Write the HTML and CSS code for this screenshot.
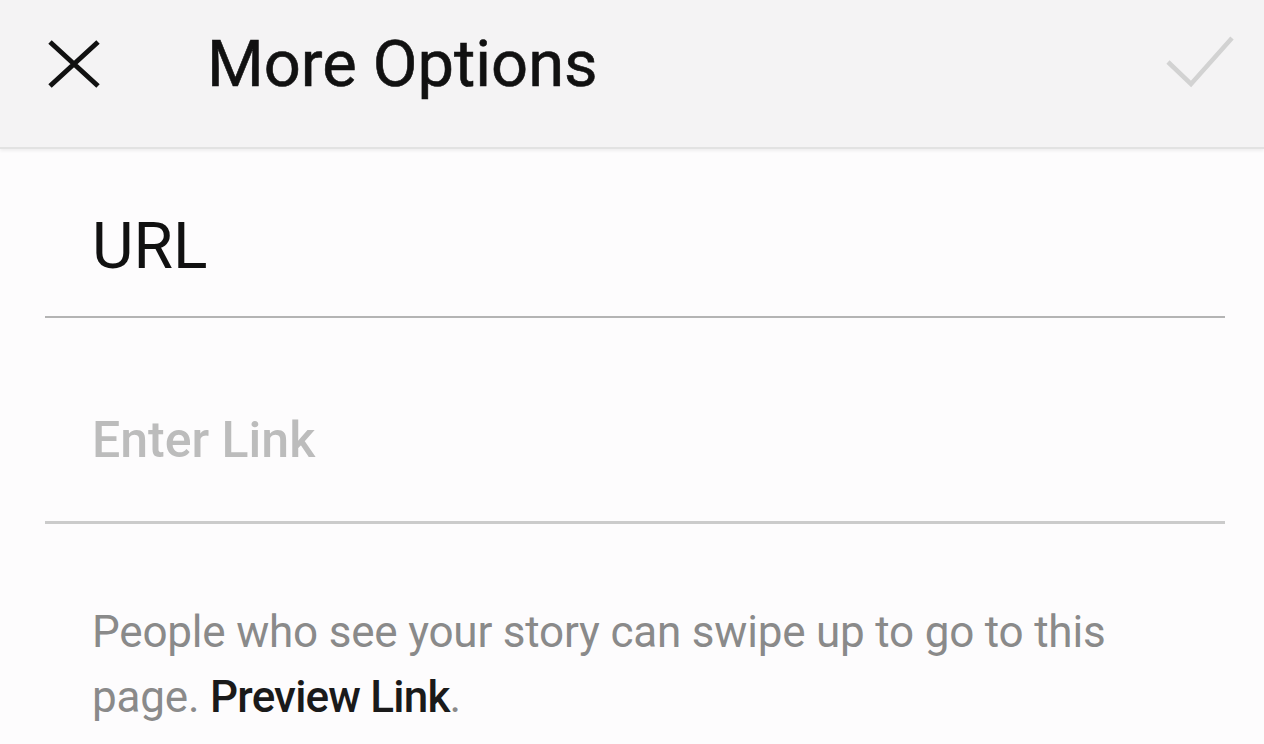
FILE: index.html
```html
<!DOCTYPE html>
<html>
<head>
<meta charset="utf-8">
<link rel="stylesheet" href="styles.css">
</head>
<body>
<div class="screen">
  <header class="topbar">
    <svg class="close" viewBox="0 0 60 48" width="60" height="48"><path d="M6 2 L54 46 M54 2 L6 46" stroke="#111" stroke-width="5" fill="none"/></svg>
    <h1 class="title">More Options</h1>
    <svg class="check" viewBox="0 0 72 60" width="72" height="60"><path d="M4 32 L27 54 L68 8" stroke="#d2d2d2" stroke-width="4.5" fill="none"/></svg>
  </header>
  <main class="content">
    <div class="field label-field"><span class="label">URL</span></div>
    <div class="field input-field"><span class="placeholder">Enter Link</span></div>
    <p class="help">People who see your story can swipe up to go to this page. <span class="link">Preview Link</span>.</p>
  </main>
</div>
</body>
</html>
```

FILE: styles.css
```css
html, body {
  margin: 0;
  padding: 0;
  background: #fdfcfd;
  font-family: Roboto, "Noto Sans", sans-serif;
}
.screen {
  width: 1264px;
  height: 744px;
  overflow: hidden;
}
.topbar {
  height: 147px;
  background: #f4f3f4;
  border-bottom: 2px solid #e2e2e2;
  box-shadow: 0 2px 3px rgba(0,0,0,0.06);
  display: flex;
  align-items: center;
  padding: 0 28px 0 44px;
  box-sizing: content-box;
}
.close {
  display: block;
  margin-top: -19px;
}
.title {
  margin: -20px 0 0 103px;
  font-size: 65px;
  font-weight: 400;
  color: #111;
  flex: 1;
  -webkit-text-stroke: 0.6px #111;
}
.check {
  display: block;
  margin-top: -28px;
}
.content {
  padding: 0 39px 0 45px;
}
.field {
  border-bottom: 2px solid #b4b4b4;
  padding-left: 47px;
  box-sizing: border-box;
}
.label-field {
  height: 169px;
  padding-top: 58px;
}
.label {
  font-size: 64px;
  color: #111;
  line-height: 80px;
}
.input-field {
  height: 206px;
  border-bottom: 3px solid #cbcbcb;
  padding-top: 92px;
}
.placeholder {
  font-size: 50px;
  color: #bcbcbc;
  font-weight: 500;
  line-height: 60px;
}
.help {
  margin: 76px 0 0 47px;
  font-size: 44px;
  line-height: 65px;
  color: #8a8a8a;
  width: 1080px;
  letter-spacing: -0.2px;
}
.link {
  color: #1a1a1a;
  font-weight: 500;
  letter-spacing: -0.8px;
}
```
